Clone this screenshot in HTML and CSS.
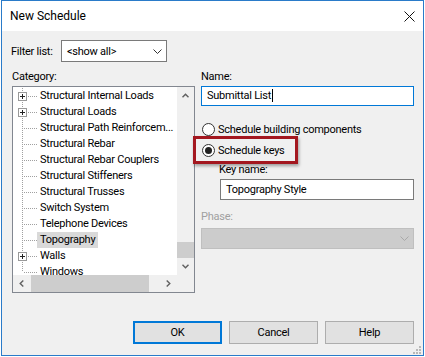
FILE: index.html
```html
<!DOCTYPE html>
<html lang="en">
<head>
    <meta charset="UTF-8">
    <title>New Schedule</title>
    <link rel="stylesheet" href="styles.css">
</head>
<body>

    <div class="window">
        <!-- Title bar -->
        <div class="titlebar">
            <span class="title">New Schedule</span>
            <svg class="close" width="11" height="11" viewBox="0 0 11 11">
                <path d="M0.5 0.5 L10.5 10.5 M10.5 0.5 L0.5 10.5" stroke="#111" stroke-width="1" fill="none"/>
            </svg>
        </div>

        <div class="content">
            <div class="filter-row">
                <span class="filter-label">Filter list:</span>
                <div class="combo">
                    <span>&lt;show all&gt;</span>
                    <svg class="chevron" width="9" height="5" viewBox="0 0 9 5">
                        <path d="M0.5 0.5 L4.5 4.5 L8.5 0.5" stroke="#333" fill="none"/>
                    </svg>
                </div>
            </div>

            <div class="columns">
                <!-- Category tree -->
                <div class="col-left">
                    <div class="label">Category:</div>
                    <div class="tree">
                        <div class="tree-list">
                            <div class="node"><span class="twisty"><svg class="plus" width="9" height="9" viewBox="0 0 9 9"><rect x="0.5" y="0.5" width="8" height="8" fill="#fff" stroke="#999"/><path d="M2 4.5 H7 M4.5 2 V7" stroke="#222"/></svg></span><span class="node-text">Structural Internal Loads</span></div>
                            <div class="node"><span class="twisty"><svg class="plus" width="9" height="9" viewBox="0 0 9 9"><rect x="0.5" y="0.5" width="8" height="8" fill="#fff" stroke="#999"/><path d="M2 4.5 H7 M4.5 2 V7" stroke="#222"/></svg></span><span class="node-text">Structural Loads</span></div>
                            <div class="node"><span class="twisty"></span><span class="node-text">Structural Path Reinforcem...</span></div>
                            <div class="node"><span class="twisty"></span><span class="node-text">Structural Rebar</span></div>
                            <div class="node"><span class="twisty"></span><span class="node-text">Structural Rebar Couplers</span></div>
                            <div class="node"><span class="twisty"></span><span class="node-text">Structural Stiffeners</span></div>
                            <div class="node"><span class="twisty"></span><span class="node-text">Structural Trusses</span></div>
                            <div class="node"><span class="twisty"></span><span class="node-text">Switch System</span></div>
                            <div class="node"><span class="twisty"></span><span class="node-text">Telephone Devices</span></div>
                            <div class="node selected"><span class="twisty"></span><span class="node-text">Topography</span></div>
                            <div class="node"><span class="twisty"><svg class="plus" width="9" height="9" viewBox="0 0 9 9"><rect x="0.5" y="0.5" width="8" height="8" fill="#fff" stroke="#999"/><path d="M2 4.5 H7 M4.5 2 V7" stroke="#222"/></svg></span><span class="node-text">Walls</span></div>
                            <div class="node last"><span class="twisty"></span><span class="node-text">Windows</span></div>
                        </div>

                        <div class="vscroll">
                            <div class="sb-btn">
                                <svg width="7" height="5" viewBox="0 0 7 5"><path d="M0.5 4.3 L3.5 1.2 L6.5 4.3" stroke="#606060" stroke-width="1.4" fill="none"/></svg>
                            </div>
                            <div class="vtrack"><div class="vthumb"></div></div>
                            <div class="sb-btn">
                                <svg width="7" height="5" viewBox="0 0 7 5"><path d="M0.5 0.7 L3.5 3.8 L6.5 0.7" stroke="#606060" stroke-width="1.4" fill="none"/></svg>
                            </div>
                        </div>

                        <div class="hscroll">
                            <div class="sb-btn">
                                <svg width="5" height="7" viewBox="0 0 5 7"><path d="M4.3 0.5 L1.2 3.5 L4.3 6.5" stroke="#606060" stroke-width="1.4" fill="none"/></svg>
                            </div>
                            <div class="htrack"><div class="hthumb"></div></div>
                            <div class="sb-btn">
                                <svg width="5" height="7" viewBox="0 0 5 7"><path d="M0.7 0.5 L3.8 3.5 L0.7 6.5" stroke="#606060" stroke-width="1.4" fill="none"/></svg>
                            </div>
                        </div>
                        <div class="corner"></div>
                    </div>
                </div>

                <!-- Name and schedule type -->
                <div class="col-right">
                    <div class="label">Name:</div>
                    <div class="text-input focused"><span class="caret">Submittal List</span></div>

                    <div class="radio-row first">
                        <span class="radio"></span>
                        <span>Schedule building components</span>
                    </div>
                    <div class="radio-row marked">
                        <span class="radio checked"></span>
                        <span>Schedule keys</span>
                        <div class="mark"></div>
                    </div>

                    <div class="label indent">Key name:</div>
                    <div class="text-input key-input">Topography Style</div>

                    <div class="label disabled phase-label">Phase:</div>
                    <div class="combo wide disabled">
                        <span></span>
                        <svg class="chevron" width="9" height="5" viewBox="0 0 9 5">
                            <path d="M0.5 0.5 L4.5 4.5 L8.5 0.5" stroke="#a8a8a8" fill="none"/>
                        </svg>
                    </div>
                </div>
            </div>

            <div class="buttons">
                <button class="btn default">OK</button>
                <button class="btn">Cancel</button>
                <button class="btn">Help</button>
            </div>
        </div>

        <svg class="grip" width="8" height="8" viewBox="0 0 8 8">
            <rect x="6" y="0" width="2" height="2" fill="#b8b8b8"/>
            <rect x="3" y="3" width="2" height="2" fill="#b8b8b8"/>
            <rect x="6" y="3" width="2" height="2" fill="#b8b8b8"/>
            <rect x="0" y="6" width="2" height="2" fill="#b8b8b8"/>
            <rect x="3" y="6" width="2" height="2" fill="#b8b8b8"/>
            <rect x="6" y="6" width="2" height="2" fill="#b8b8b8"/>
        </svg>
    </div>

</body>
</html>
```

FILE: styles.css
```css
/* Reset */
* {
    margin: 0;
    padding: 0;
    box-sizing: border-box;
}

body {
    width: 425px;
    height: 357px;
    background: #ffffff;
    font-family: Roboto, "Liberation Sans", sans-serif;
    font-size: 11px;
    letter-spacing: -0.25px;
    color: #000;
    overflow: hidden;
}

/* Window frame */
.window {
    position: relative;
    margin-left: 1px;
    width: 423px;
    height: 356px;
    border: 1px solid #2a7bc9;
    background: #f0f0f0;
}

.titlebar {
    height: 30px;
    background: #ffffff;
    display: flex;
    align-items: center;
    justify-content: space-between;
    padding: 0 8px 0 8px;
}

.title {
    font-size: 12px;
    letter-spacing: 0;
}

.content {
    padding: 9px 8px 0 10px;
}

/* Filter row */
.filter-row {
    display: flex;
    align-items: center;
    gap: 6px;
    height: 22px;
    margin-left: -1px;
}

.filter-label {
    flex: none;
    width: 44px;
    white-space: nowrap;
}

.combo {
    width: 106px;
    height: 22px;
    border: 1px solid #7a7a7a;
    background: #ffffff;
    display: flex;
    align-items: center;
    justify-content: space-between;
    padding: 0 4px 0 5px;
}

.combo.wide {
    width: 213px;
    height: 21px;
    margin-top: 3px;
}

.combo.disabled {
    background: #cccccc;
    border-color: #bfbfbf;
}

/* Two columns */
.columns {
    display: flex;
    gap: 6px;
    margin-top: 7px;
}

.col-left {
    width: 183px;
}

.col-right {
    width: 213px;
}

.label {
    height: 16px;
    line-height: 16px;
}

.label.indent {
    margin-top: 4px;
    padding-left: 18px;
}

.label.disabled {
    color: #a0a0a0;
}

.phase-label {
    margin-top: 9px;
}

/* Tree view */
.tree {
    margin-top: 1px;
    width: 183px;
    height: 207px;
    border: 1px solid #828790;
    background: #ffffff;
    display: grid;
    grid-template-columns: 164px 17px;
    grid-template-rows: 188px 17px;
}

.tree-list {
    padding-top: 1px;
    overflow: hidden;
}

.node {
    display: flex;
    align-items: center;
    height: 16px;
    white-space: nowrap;
}

.twisty {
    flex: none;
    width: 24px;
    height: 16px;
    display: flex;
    align-items: center;
    background:
        repeating-linear-gradient(#a0a0a0 0 1px, transparent 1px 2px) 9px 0 / 1px 16px no-repeat,
        repeating-linear-gradient(to right, #a0a0a0 0 1px, transparent 1px 2px) 11px 8px / 13px 1px no-repeat;
}

.node.last .twisty {
    background:
        repeating-linear-gradient(#a0a0a0 0 1px, transparent 1px 2px) 9px 0 / 1px 8px no-repeat,
        repeating-linear-gradient(to right, #a0a0a0 0 1px, transparent 1px 2px) 11px 8px / 13px 1px no-repeat;
}

.plus {
    margin-left: 5px;
}

.node-text {
    padding: 0 3px;
    line-height: 16px;
}

.node.selected .node-text {
    background: #d9d9d9;
}

/* Scroll bars */
.vscroll {
    background: #f0f0f0;
    display: flex;
    flex-direction: column;
}

.hscroll {
    background: #f0f0f0;
    display: flex;
}

.sb-btn {
    flex: none;
    width: 17px;
    height: 17px;
    display: flex;
    align-items: center;
    justify-content: center;
}

.vtrack {
    flex: 1;
    display: flex;
    flex-direction: column;
    justify-content: flex-end;
}

.vthumb {
    height: 16px;
    background: #cdcdcd;
}

.htrack {
    flex: 1;
    display: flex;
    padding-left: 1px;
}

.hthumb {
    width: 118px;
    background: #cdcdcd;
}

.corner {
    background: #f0f0f0;
}

/* Inputs */
.text-input {
    margin-top: 1px;
    height: 20px;
    border: 1px solid #7a7a7a;
    background: #ffffff;
    padding-left: 5px;
    line-height: 18px;
    white-space: nowrap;
}

.text-input.focused {
    border-color: #0078d7;
}

.caret {
    border-right: 1px solid #000;
    padding-right: 1px;
}

.key-input {
    margin-left: 19px;
    height: 21px;
    line-height: 19px;
}

.radio-row {
    display: flex;
    align-items: center;
    gap: 3px;
    height: 16px;
    padding-left: 1px;
    margin-top: 5px;
}

.radio-row.first {
    margin-top: 15px;
}

.radio-row.marked {
    position: relative;
}

.radio {
    width: 13px;
    height: 13px;
    border: 1px solid #333;
    border-radius: 50%;
    background: #ffffff;
    display: flex;
    align-items: center;
    justify-content: center;
}

.radio.checked::after {
    content: '';
    width: 7px;
    height: 7px;
    border-radius: 50%;
    background: #222;
}

/* Red call-out over "Schedule keys" */
.mark {
    position: absolute;
    left: -8px;
    top: -6px;
    width: 105px;
    height: 28px;
    border: 3px solid #a3171f;
    box-shadow: 1px 2px 3px rgba(0, 0, 0, 0.35);
}

/* Buttons */
.buttons {
    display: flex;
    justify-content: flex-end;
    gap: 7px;
    margin-top: 28px;
    padding-right: 1px;
}

.btn {
    width: 89px;
    height: 23px;
    border: 1px solid #adadad;
    background: #e1e1e1;
    font-family: Roboto, "Liberation Sans", sans-serif;
    font-size: 11px;
    letter-spacing: -0.25px;
    color: #000;
}

.btn.default {
    border: 2px solid #0078d7;
}

.grip {
    position: absolute;
    right: 2px;
    bottom: 1px;
}
```
